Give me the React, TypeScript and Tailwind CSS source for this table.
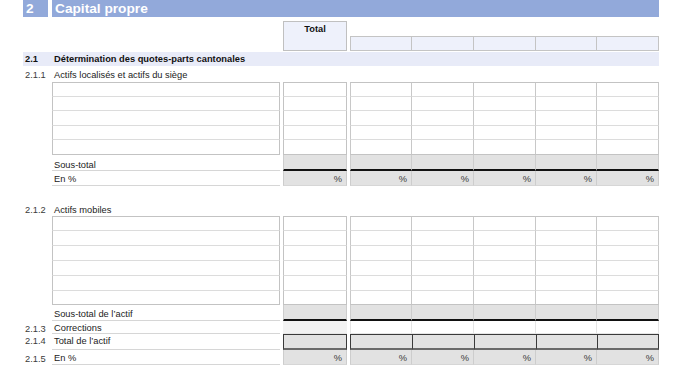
import React from "react";

type Kind = "input" | "subtotal" | "percent" | "correction" | "total";

const VALUE_W = ["w-[62px]", "w-[62px]", "w-[62px]", "w-[61px]", "w-[62px]"];

function TotalCell({ kind, first, last }: { kind: Kind; first?: boolean; last?: boolean }) {
  if (kind === "input") {
    return (
      <div
        className={`w-[64px] border-x border-[#C3C3C3] border-b ${last ? "border-b-[#C3C3C3]" : "border-b-[#DCDCDC]"} ${first ? "border-t" : ""}`}
      />
    );
  }
  if (kind === "subtotal") {
    return <div className="w-[64px] bg-[#E2E2E2] border-x border-[#CDCDCD] border-b-2 border-b-[#111111]" />;
  }
  if (kind === "percent") {
    return (
      <div className="w-[64px] bg-[#E2E2E2] border-x border-[#CDCDCD] border-b border-b-[#D6D6D6] flex items-end justify-end pr-[4px] pb-[1px] text-[#3A3A3A]">
        %
      </div>
    );
  }
  if (kind === "correction") {
    return <div className="w-[64px] bg-[#F2F2F2] border-b border-[#E6E6E6]" />;
  }
  return <div className="w-[64px] bg-[#E2E2E2] border border-[#3A3A3A] border-b-2 border-b-[#6A6A6A]" />;
}

function ValueCell({ kind, idx, first, last }: { kind: Kind; idx: number; first?: boolean; last?: boolean }) {
  const w = VALUE_W[idx];
  const left = idx === 0 ? "border-l" : "";
  if (kind === "input") {
    return (
      <div
        className={`${w} ${left} border-r border-[#C8C8C8] border-b ${last ? "border-b-[#C3C3C3]" : "border-b-[#DCDCDC]"} ${first ? "border-t border-t-[#C3C3C3]" : ""}`}
      />
    );
  }
  if (kind === "subtotal") {
    return <div className={`${w} ${left} bg-[#E2E2E2] border-r border-[#CDCDCD] border-b-2 border-b-[#111111]`} />;
  }
  if (kind === "percent") {
    return (
      <div
        className={`${w} ${left} bg-[#E2E2E2] border-r border-[#CDCDCD] border-b border-b-[#D6D6D6] flex items-end justify-end pr-[4px] pb-[1px] text-[#3A3A3A]`}
      >
        %
      </div>
    );
  }
  if (kind === "correction") {
    return <div className={`${w} ${left} border-r border-[#E4E4E4] border-b border-b-[#E6E6E6]`} />;
  }
  return (
    <div
      className={`${w} border-l ${idx === 4 ? "border-r" : ""} bg-[#E2E2E2] border-t border-[#3A3A3A] border-b-2 border-b-[#6A6A6A]`}
    />
  );
}

function GridRow({
  h,
  kind,
  num,
  label,
  first,
  last,
  align = "items-end pb-[1px]",
}: {
  h: string;
  kind: Kind;
  num?: string;
  label?: string;
  first?: boolean;
  last?: boolean;
  align?: string;
}) {
  const labelCell =
    kind === "input" ? (
      <div
        className={`w-[228px] border-x border-[#C3C3C3] border-b ${last ? "border-b-[#C3C3C3]" : "border-b-[#DCDCDC]"} ${first ? "border-t" : ""}`}
      />
    ) : (
      <div className={`w-[228px] border-b border-[#D6D6D6] flex ${align} pl-[2px] text-[#222222]`}>{label}</div>
    );
  return (
    <div className={`flex ${h}`}>
      <div className={`w-[29px] flex ${align} pl-[2px] text-[#3A3A3A]`}>{num}</div>
      {labelCell}
      <div className="w-[3px]" />
      <TotalCell kind={kind} first={first} last={last} />
      <div className="w-[3px]" />
      <div className="flex">
        {VALUE_W.map((_, i) => (
          <ValueCell key={i} kind={kind} idx={i} first={first} last={last} />
        ))}
      </div>
    </div>
  );
}

function InputBlock({ heights }: { heights: string[] }) {
  return (
    <>
      {heights.map((h, i) => (
        <GridRow key={i} h={h} kind="input" first={i === 0} last={i === heights.length - 1} />
      ))}
    </>
  );
}

export default function App() {
  return (
    <div
      className="w-[682px] h-[368px] bg-white pl-[23px] text-[9.3px] leading-none overflow-hidden"
      style={{ fontFamily: '"Liberation Sans", Arial, sans-serif' }}
    >
      {/* Section title */}
      <div className="flex h-[17px]">
        <div className="w-[25px] bg-[#92A9DA] text-white font-bold text-[13.7px] flex items-center pl-[3px] pt-[1px]">
          2
        </div>
        <div className="w-[4px]" />
        <div className="w-[607px] bg-[#92A9DA] text-white font-bold text-[13.7px] flex items-center pl-[3px] pt-[1px]">
          Capital propre
        </div>
      </div>

      {/* Column headers */}
      <div className="flex h-[31px] mt-[4px]">
        <div className="w-[257px]" />
        <div className="w-[3px]" />
        <div className="w-[64px] h-[30px] border border-[#C0C0C0] bg-[#EEF1FB] text-center font-bold text-[#111] pt-[3px]">
          Total
        </div>
        <div className="w-[3px]" />
        <div className="flex self-start mt-[15px] h-[15px]">
          {VALUE_W.map((w, i) => (
            <div
              key={i}
              className={`${w} ${i === 0 ? "border-l" : ""} border-r border-y border-[#C4C4C4] bg-[#EEF1FB]`}
            />
          ))}
        </div>
      </div>

      {/* 2.1 */}
      <div className="flex h-[14px] w-[636px] bg-[#E8EBF8] font-bold text-[#111] items-center pt-[2px]">
        <div className="w-[29px] pl-[2px]">2.1</div>
        <div className="pl-[2px]">Détermination des quotes-parts cantonales</div>
      </div>

      {/* 2.1.1 */}
      <div className="flex h-[16px] items-end pb-[2px] text-[#222222]">
        <div className="w-[29px] pl-[2px] text-[#3A3A3A]">2.1.1</div>
        <div className="pl-[2px]">Actifs localisés et actifs du siège</div>
      </div>
      <InputBlock heights={["h-[15px]", "h-[14px]", "h-[15px]", "h-[14px]", "h-[15px]"]} />
      <GridRow h="h-[16px]" kind="subtotal" label="Sous-total" align="items-end pb-0" />
      <GridRow h="h-[15px]" kind="percent" label="En %" />

      <div className="h-[17px]" />

      {/* 2.1.2 */}
      <div className="flex h-[13px] items-end pb-[1px] text-[#222222]">
        <div className="w-[29px] pl-[2px] text-[#3A3A3A]">2.1.2</div>
        <div className="pl-[2px]">Actifs mobiles</div>
      </div>
      <InputBlock heights={["h-[15px]", "h-[15px]", "h-[15px]", "h-[15px]", "h-[15px]", "h-[14px]"]} />
      <GridRow h="h-[16px]" kind="subtotal" label="Sous-total de l’actif" align="items-end pb-[1px]" />
      <GridRow h="h-[13px]" kind="correction" num="2.1.3" label="Corrections" align="items-end pb-0" />
      <GridRow h="h-[16px]" kind="total" num="2.1.4" label="Total de l’actif" align="items-center" />
      <GridRow h="h-[15px]" kind="percent" num="2.1.5" label="En %" />
    </div>
  );
}
